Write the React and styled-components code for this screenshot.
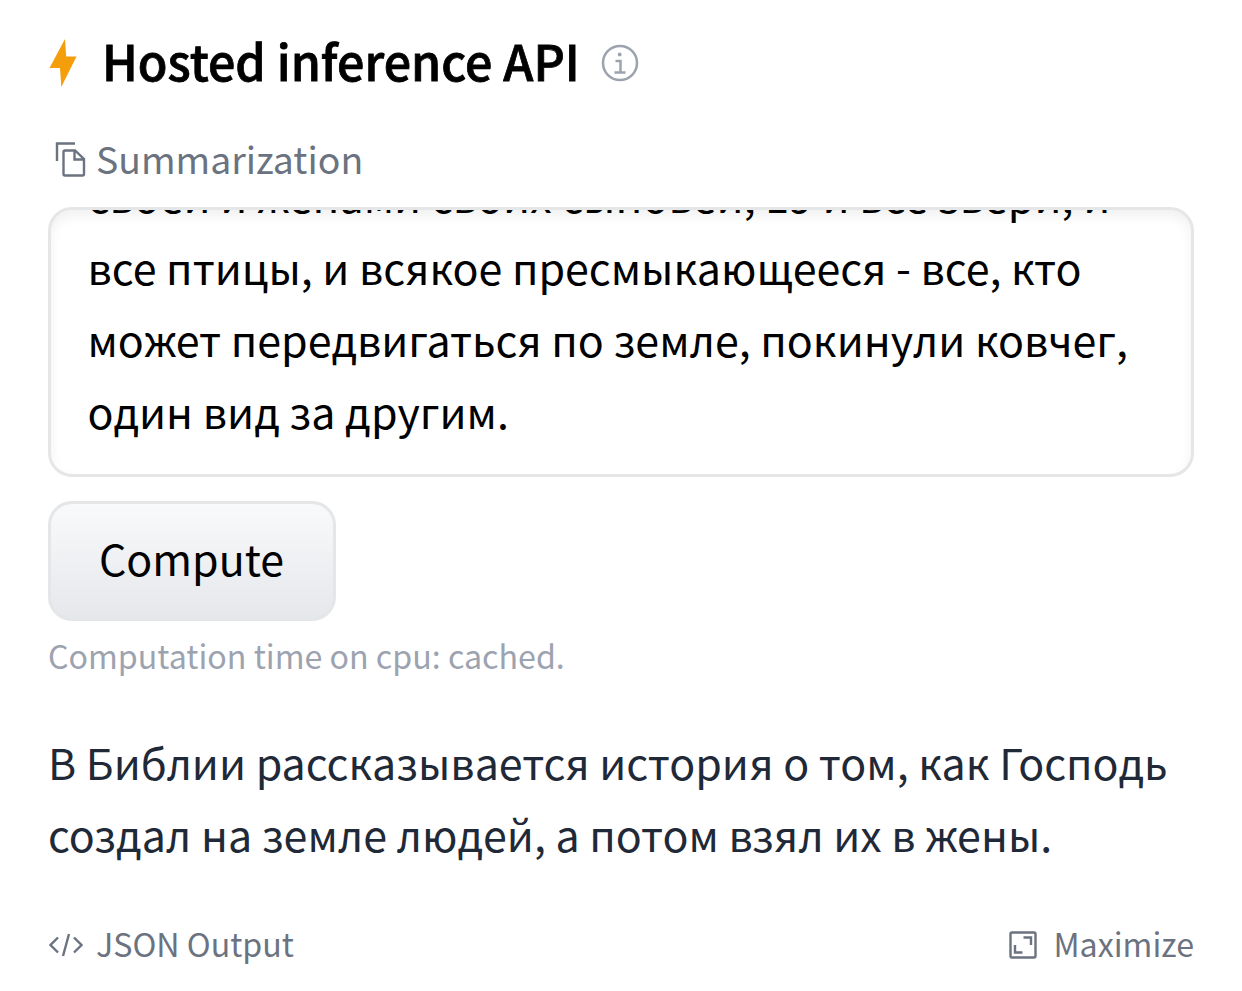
import React from 'react';
import styled, { createGlobalStyle } from 'styled-components';

const Global = createGlobalStyle`
  * { box-sizing: border-box; }
  body {
    margin: 0;
    background: #fff;
    font-family: "Noto Sans CJK SC", "Noto Sans", sans-serif;
  }
`;

const Widget = styled.main`
  display: flex;
  flex-direction: column;
  align-items: stretch;
  width: 1242px;
  height: 991px;
  padding: 27px 48px 0;
  overflow: hidden;
`;

const Header = styled.header`
  display: flex;
  align-items: center;
  height: 72px;
`;

const Title = styled.h1`
  margin: 0 21.5px 0 25px;
  padding-bottom: 6px;
  font-size: 48.4px;
  line-height: 66px;
  font-weight: 500;
  -webkit-text-stroke: 0.8px #000;
  color: #000;
  white-space: nowrap;
`;

const Task = styled.div`
  display: flex;
  align-items: center;
  gap: 9.5px;
  height: 60px;
  margin-top: 30px;
  padding-left: 6.5px;
  font-size: 37.4px;
  line-height: 58px;
  color: #6b7280;

  span {
    padding-bottom: 2px;
  }
`;

const Input = styled.div`
  display: flex;
  flex-direction: column;
  justify-content: flex-end;
  height: 270px;
  margin-top: 18px;
  padding: 0 36.5px 28px;
  border: 3px solid #e5e6e8;
  border-radius: 24px;
  box-shadow: inset 0 6px 12px rgba(0, 0, 0, 0.06);
  overflow: hidden;
`;

const Line = styled.div`
  flex: none;
  font-size: 42.95px;
  line-height: 72px;
  height: 72px;
  white-space: nowrap;
  color: ${(p) => p.$color || '#000'};
`;

const Unkerned = styled.span`
  font-kerning: none;
`;

const Button = styled.button`
  width: 288px;
  height: 120px;
  margin: 24px 0 0;
  padding: 0 1px 8px 0;
  border: 3px solid #e5e6e8;
  border-radius: 24px;
  background: linear-gradient(to bottom, #f9fafb, #e5e7eb) border-box;
  font-family: inherit;
  font-size: 42.9px;
  line-height: 72px;
  color: #000;
`;

const Note = styled.div`
  height: 48px;
  margin-top: 10px;
  font-size: 32.2px;
  line-height: 48px;
  color: #9ca3af;
  white-space: nowrap;
`;

const Output = styled.div`
  margin-top: 46px;
`;

const Footer = styled.footer`
  display: flex;
  justify-content: space-between;
  margin-top: 52px;
`;

const Action = styled.div`
  display: flex;
  align-items: center;
  gap: ${(p) => p.$gap}px;
  height: 48px;
  font-size: 32.2px;
  line-height: 44px;
  color: #6b7280;
  white-space: nowrap;

  span {
    padding-bottom: 4px;
  }
`;

const Icon = styled.svg`
  display: block;
  flex: none;
`;

const Bolt = () => (
  <Icon width="29" height="50" viewBox="0 0 29 50" fill="#f59e0b">
    <path d="M17 1 1.500 30H12l1.300 19L28.500 18.500H18.200z" />
  </Icon>
);

const Info = () => (
  <Icon width="38" height="38" viewBox="0 0 38 38" fill="none" stroke="#9ca3af" strokeWidth="2.5">
    <circle cx="19" cy="19" r="17" />
    <path d="M14.500 17h5v11.500M13.500 28.500h11" />
    <circle cx="18.700" cy="10.500" r="1.900" fill="#9ca3af" stroke="none" />
  </Icon>
);

const Copy = () => (
  <Icon width="32" height="36" viewBox="0 0 32 36" fill="none" stroke="#6b7280" strokeWidth="2.4">
    <path d="M2 20V2.500h18" />
    <path d="M10 9.500h10l9 8.500V33a1.500 1.500 0 0 1-1.500 1.500H10A1.500 1.500 0 0 1 8.500 33V11A1.500 1.500 0 0 1 10 9.500zM19.500 9.500v9h9.500" />
  </Icon>
);

const Code = () => (
  <Icon width="35" height="30" viewBox="0 0 35 30" fill="none" stroke="#6b7280" strokeWidth="2.4">
    <path d="M10 7.500 2.500 15l7.500 7.500M26 7.500l7.500 7.500-7.500 7.500M21 4l-6 22" />
  </Icon>
);

const Expand = () => (
  <Icon width="28" height="28" viewBox="0 0 28 28" fill="none" stroke="#6b7280" strokeWidth="2.4">
    <rect x="1.500" y="1.500" width="25" height="25" rx="1.500" />
    <path d="M14.500 6.500h7.500v7.500M6 14v7.500h7.500" />
  </Icon>
);

export default function App() {
  return (
    <>
      <Global />
      <Widget>
        <Header>
          <Bolt />
          <Title>Hosted inference API</Title>
          <Info />
        </Header>
        <Task>
          <Copy />
          <span>Summarization</span>
        </Task>
        <Input>
          <Line>своей и женами своих сыновей, 19 и все звери, и</Line>
          <Line>все птицы, и всякое пресмыкающееся - все, кто</Line>
          <Line>
            может передвигаться по земле, покинули ковче<Unkerned>г,</Unkerned>
          </Line>
          <Line>один вид за другим.</Line>
        </Input>
        <Button>Compute</Button>
        <Note>Computation time on cpu: cached.</Note>
        <Output>
          <Line $color="#1f2937">В Библии рассказывается история о том, как Господь</Line>
          <Line $color="#1f2937">создал на земле людей, а потом взял их в жены.</Line>
        </Output>
        <Footer>
          <Action $gap={13}>
            <Code />
            <span>JSON Output</span>
          </Action>
          <Action $gap={16}>
            <Expand />
            <span>Maximize</span>
          </Action>
        </Footer>
      </Widget>
    </>
  );
}
